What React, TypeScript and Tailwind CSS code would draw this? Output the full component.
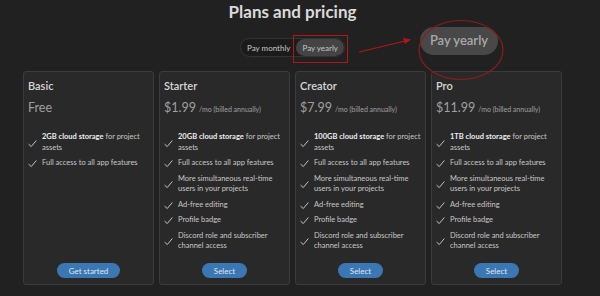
import React from 'react';

interface Plan {
  name: string;
  price: string;
  suffix?: string;
  features: React.ReactNode[];
  cta: string;
}

const plans: Plan[] = [
  {
    name: 'Basic',
    price: 'Free',
    features: [
      <><b className="font-bold text-[#eeeeee]">2GB cloud storage</b> for project assets</>,
      'Full access to all app features',
    ],
    cta: 'Get started',
  },
  {
    name: 'Starter',
    price: '$1.99',
    suffix: '/mo (billed annually)',
    features: [
      <><b className="font-bold text-[#eeeeee]">20GB cloud storage</b> for project assets</>,
      'Full access to all app features',
      'More simultaneous real-time users in your projects',
      'Ad-free editing',
      'Profile badge',
      'Discord role and subscriber channel access',
    ],
    cta: 'Select',
  },
  {
    name: 'Creator',
    price: '$7.99',
    suffix: '/mo (billed annually)',
    features: [
      <><b className="font-bold text-[#eeeeee]">100GB cloud storage</b> for project assets</>,
      'Full access to all app features',
      'More simultaneous real-time users in your projects',
      'Ad-free editing',
      'Profile badge',
      'Discord role and subscriber channel access',
    ],
    cta: 'Select',
  },
  {
    name: 'Pro',
    price: '$11.99',
    suffix: '/mo (billed annually)',
    features: [
      <><b className="font-bold text-[#eeeeee]">1TB cloud storage</b> for project assets</>,
      'Full access to all app features',
      'More simultaneous real-time users in your projects',
      'Ad-free editing',
      'Profile badge',
      'Discord role and subscriber channel access',
    ],
    cta: 'Select',
  },
];

const Check = () => (
  <svg viewBox="0 0 10 10" className="w-[9px] h-[9px] shrink-0 mt-[1px]" fill="none" stroke="#c4c4c4" strokeWidth="1.1" strokeLinecap="round" strokeLinejoin="round">
    <path d="M1 6 L3.6 8.4 L9 2" />
  </svg>
);

const PlanCard = ({ plan }: { plan: Plan }) => (
  <div className="w-[131px] h-[214px] flex flex-col bg-[#292929] border border-[#3b3b3b] rounded-[3px] px-[4px] pt-[6px] pb-[6px]">
    <div className="text-[11px] leading-[16px] font-semibold text-[#d6d6d6]">{plan.name}</div>
    <div className="mt-[5px] flex items-baseline gap-[3px]">
      <span className="text-[12.5px] leading-[18px] text-[#a0a0a0]">{plan.price}</span>
      {plan.suffix && <span className="text-[7px] text-[#a0a0a0]">{plan.suffix}</span>}
    </div>
    <ul className="mt-[15px] flex flex-col gap-[5px]">
      {plan.features.map((f, i) => (
        <li key={i} className="flex items-center gap-[5px] text-[7.5px] leading-[10.5px] text-[#c8c8c8]">
          <Check />
          <span>{f}</span>
        </li>
      ))}
    </ul>
    <div className="mt-auto flex justify-center">
      <button className="h-[15px] px-[12px] rounded-full bg-[#3b77b3] text-[8px] text-[#dde8f3]">
        {plan.cta}
      </button>
    </div>
  </div>
);

export default function App() {
  return (
    <div className="w-[600px] h-[296px] bg-[#212121] overflow-hidden" style={{ fontFamily: 'Lato, "Noto Sans", sans-serif' }}>
      <div className="relative w-[539px] ml-[23px] flex flex-col items-center">
        <h1 className="mt-[1px] text-[17px] leading-[22px] font-bold text-[#dadada]">Plans and pricing</h1>

        <div className="mt-[15px] h-[19px] flex items-center rounded-full bg-[#1b1b1b] border border-[#333] text-[8px] text-[#c8c8c8] overflow-hidden">
          <span className="px-[6px]">Pay monthly</span>
          <span className="h-full flex items-center px-[6px] bg-[#444444] rounded-full">Pay yearly</span>
        </div>

        {/* annotations */}
        <div className="absolute left-[270px] top-[35px] w-[55px] h-[28px] border border-[#b01818]" />
        <svg className="absolute left-[334px] top-[36px]" width="56" height="20" viewBox="0 0 56 20">
          <line x1="2" y1="16" x2="48" y2="5" stroke="#b01818" strokeWidth="1.2" />
          <polygon points="54,3.5 46,2 48,8" fill="#b01818" />
        </svg>
        <div className="absolute left-[397px] top-[27px] w-[78px] h-[28px] rounded-full bg-[#484848] flex items-center justify-center text-[13px] font-semibold text-[#a9a9a9]">
          Pay yearly
        </div>
        <svg className="absolute left-[394px] top-[19px]" width="88" height="62" viewBox="0 0 88 62">
          <ellipse cx="44" cy="31" rx="42" ry="29.5" fill="none" stroke="#8c1c1c" strokeWidth="1.2" />
        </svg>

        <div className="mt-[14px] flex gap-[5px]">
          {plans.map((p) => (
            <PlanCard key={p.name} plan={p} />
          ))}
        </div>
      </div>
    </div>
  );
}
